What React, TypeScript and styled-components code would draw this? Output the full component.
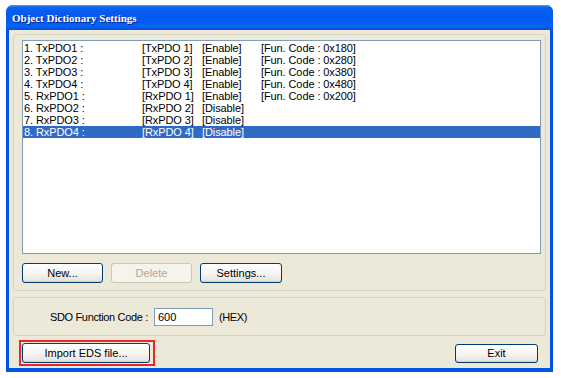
import styled, { createGlobalStyle } from "styled-components";

const GlobalStyle = createGlobalStyle`
  html, body {
    margin: 0;
    padding: 0;
    background: #ffffff;
  }
  body {
    font-family: "Liberation Sans", Arial, sans-serif;
    font-size: 11px;
  }
`;

type Entry = {
  name: string;
  pdo: string;
  state: string;
  code?: string;
};

const entries: Entry[] = [
  { name: "1. TxPDO1 :", pdo: "[TxPDO 1]", state: "[Enable]", code: "[Fun. Code : 0x180]" },
  { name: "2. TxPDO2 :", pdo: "[TxPDO 2]", state: "[Enable]", code: "[Fun. Code : 0x280]" },
  { name: "3. TxPDO3 :", pdo: "[TxPDO 3]", state: "[Enable]", code: "[Fun. Code : 0x380]" },
  { name: "4. TxPDO4 :", pdo: "[TxPDO 4]", state: "[Enable]", code: "[Fun. Code : 0x480]" },
  { name: "5. RxPDO1 :", pdo: "[RxPDO 1]", state: "[Enable]", code: "[Fun. Code : 0x200]" },
  { name: "6. RxPDO2 :", pdo: "[RxPDO 2]", state: "[Disable]" },
  { name: "7. RxPDO3 :", pdo: "[RxPDO 3]", state: "[Disable]" },
  { name: "8. RxPDO4 :", pdo: "[RxPDO 4]", state: "[Disable]" },
];

export default function App() {
  return (
    <>
      <GlobalStyle />
      <Window>
        <TitleBar>Object Dictionary Settings</TitleBar>
        <Client>
          <GroupBox>
            <ListBox>
              {entries.map((e, i) => (
                <Row key={e.name} selected={i === entries.length - 1}>
                  <Cell w={118}>{e.name}</Cell>
                  <Cell w={60}>{e.pdo}</Cell>
                  <Cell w={59}>{e.state}</Cell>
                  <Cell>{e.code}</Cell>
                </Row>
              ))}
            </ListBox>
            <ButtonRow>
              <Button w={81}>New...</Button>
              <Button w={81} disabled>
                Delete
              </Button>
              <Button w={82}>Settings...</Button>
            </ButtonRow>
          </GroupBox>
          <SdoBox>
            <Label>SDO Function Code :</Label>
            <TextInput defaultValue="600" />
            <Label>(HEX)</Label>
          </SdoBox>
          <Footer>
            <Highlight>
              <Button w={128}>Import EDS file...</Button>
            </Highlight>
            <Button w={83} h={19}>
              Exit
            </Button>
          </Footer>
        </Client>
      </Window>
    </>
  );
}

const Window = styled.div`
  margin: 5px 0 0 6px;
  width: 547px;
  height: 367px;
  display: flex;
  flex-direction: column;
  border-radius: 7px 7px 0 0;
  background: #0054e3;
  overflow: hidden;
`;

const TitleBar = styled.div`
  height: 25px;
  flex: none;
  display: flex;
  align-items: center;
  padding: 0 0 0 6px;
  color: #ffffff;
  font-family: "Liberation Serif", "Times New Roman", serif;
  font-weight: 700;
  font-size: 11px;
  text-shadow: 1px 1px 0 #0a1e80;
  background: linear-gradient(
    to bottom,
    #4a9dff 0%,
    #0a62f0 10%,
    #0058ee 45%,
    #0462f4 85%,
    #0052e0 100%
  );
`;

const Client = styled.div`
  flex: 1;
  margin: 0 3px 4px 3px;
  background: #ece9d8;
  display: flex;
  flex-direction: column;
  padding: 4px 4px 0 4px;
  gap: 6px;
`;

const GroupBox = styled.div`
  border: 1px solid #d5d2c0;
  border-radius: 4px;
  padding: 5px 4px 7px 8px;
  display: flex;
  flex-direction: column;
  gap: 9px;
`;

const ListBox = styled.div`
  height: 211px;
  border: 1px solid #7f9db9;
  background: #ffffff;
  padding: 1px 0 0 0;
  display: flex;
  flex-direction: column;
`;

const Row = styled.div<{ selected?: boolean }>`
  height: 12px;
  line-height: 12px;
  display: flex;
  padding-left: 1px;
  white-space: nowrap;
  letter-spacing: -0.1px;
  color: ${(p) => (p.selected ? "#ffffff" : "#000000")};
  background: ${(p) => (p.selected ? "#316ac5" : "transparent")};
`;

const Cell = styled.span<{ w?: number }>`
  flex: ${(p) => (p.w ? `0 0 ${p.w}px` : "1")};
`;

const ButtonRow = styled.div`
  display: flex;
  gap: 8px;
`;

const Button = styled.button<{ w: number; h?: number }>`
  width: ${(p) => p.w}px;
  height: ${(p) => p.h ?? 20}px;
  padding: 0;
  font-family: "Liberation Sans", Arial, sans-serif;
  font-size: 11px;
  color: #000000;
  border: 1px solid #003c74;
  border-radius: 3px;
  background: linear-gradient(to bottom, #ffffff 0%, #f4f3ee 60%, #e3e1d6 100%);
  box-shadow: inset 0 -1px 0 #d6d0c5;

  &:disabled {
    color: #aca899;
    border-color: #c9c7ba;
    background: #f5f4ea;
    box-shadow: none;
  }
`;

const SdoBox = styled.div`
  height: 37px;
  border: 1px solid #d5d2c0;
  border-radius: 4px;
  display: flex;
  align-items: center;
  padding-left: 36px;
  gap: 6px;
`;

const Label = styled.span`
  color: #000000;
  letter-spacing: -0.35px;
`;

const TextInput = styled.input`
  width: 59px;
  height: 18px;
  box-sizing: border-box;
  border: 1px solid #7f9db9;
  padding: 0 3px;
  font-family: "Liberation Sans", Arial, sans-serif;
  font-size: 11px;
  outline: none;
`;

const Footer = styled.div`
  display: flex;
  align-items: center;
  justify-content: space-between;
  padding: 0 8px 0 6px;
  margin-top: -2px;
`;

const Highlight = styled.div`
  border: 2px solid #e8262b;
  padding: 1px 3px 1px 1px;
  display: flex;
`;
